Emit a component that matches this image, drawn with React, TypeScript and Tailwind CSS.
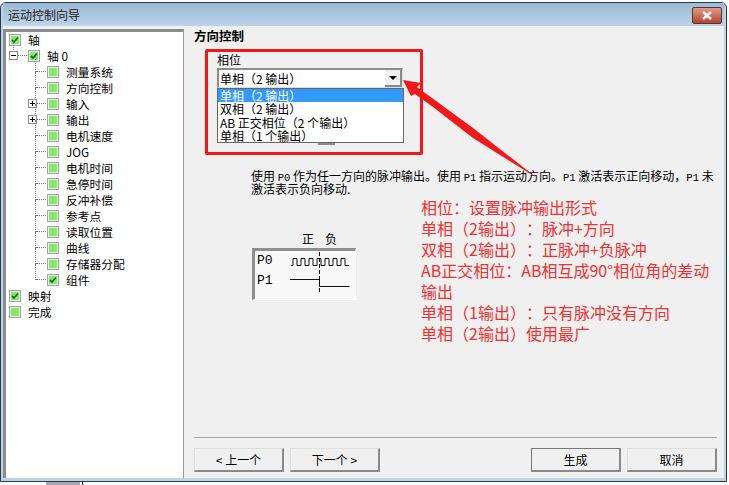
const uiFont = { fontFamily: '"Noto Sans CJK SC", "Liberation Sans", sans-serif' }

type TreeRow = { label: string; level: number; checked?: boolean; expander?: string; last?: boolean }

const rows: TreeRow[] = [
  { label: "轴", level: 0, checked: true },
  { label: "轴 0", level: 1, checked: true, expander: "-" },
  { label: "测量系统", level: 2 },
  { label: "方向控制", level: 2 },
  { label: "输入", level: 2, expander: "+" },
  { label: "输出", level: 2, expander: "+" },
  { label: "电机速度", level: 2 },
  { label: "JOG", level: 2 },
  { label: "电机时间", level: 2 },
  { label: "急停时间", level: 2 },
  { label: "反冲补偿", level: 2 },
  { label: "参考点", level: 2 },
  { label: "读取位置", level: 2 },
  { label: "曲线", level: 2 },
  { label: "存储器分配", level: 2 },
  { label: "组件", level: 2, checked: true, last: true },
  { label: "映射", level: 0, checked: true },
  { label: "完成", level: 0 },
]

const annotations = [
  "相位：设置脉冲输出形式",
  "单相（2输出）：脉冲+方向",
  "双相（2输出）：正脉冲+负脉冲",
  "AB正交相位：AB相互成90°相位角的差动",
  "输出",
  "单相（1输出）：只有脉冲没有方向",
  "单相（2输出）使用最广",
]

// square pulse train for the P0 channel
const pulses = "M39 17.5h2" + "V10.5h4V17.5h4".repeat(7)

function Mono({ children }: { children: string }) {
  return <span className="font-['Liberation_Mono'] text-[10.5px] leading-[13px]">{children}</span>
}

function CheckBox({ checked }: { checked?: boolean }) {
  return (
    <span className="flex h-[12px] w-[12px] shrink-0 items-center justify-center border border-[#97a897] bg-[#e6efe6]">
      <span className="relative h-[8px] w-[8px] bg-[#86e868]">
        {checked && (
          <svg viewBox="0 0 8 8" className="absolute inset-0 h-[8px] w-[8px]">
            <path d="M1 4l2 2 4-4.5" fill="none" stroke="#14702a" strokeWidth="1.8" />
          </svg>
        )}
      </span>
    </span>
  )
}

function Expander({ sign }: { sign: string }) {
  return (
    <span className="absolute left-[-19px] top-[1px] flex h-[9px] w-[9px] items-center justify-center border border-[#8a8a8a] bg-white">
      <span className="relative h-px w-[5px] bg-black">
        {sign === "+" && <span className="absolute left-[2px] top-[-2px] h-[5px] w-px bg-black" />}
      </span>
    </span>
  )
}

function Row({ row }: { row: TreeRow }) {
  const pad = row.level === 0 ? "pl-[3px]" : row.level === 1 ? "pl-[22px]" : "pl-[41px]"
  return (
    <div className={`flex h-[16px] items-center ${pad}`}>
      <span className="relative flex items-center">
        {row.level > 0 && (
          <span className="absolute left-[-11px] top-[5px] w-[10px] border-t border-dotted border-[#777]" />
        )}
        {row.level === 2 && (
          <span className="absolute left-[-12px] top-[-10px] h-[16px] border-l border-dotted border-[#777]" />
        )}
        {row.level === 1 && (
          <span className="absolute left-[-15px] top-[-10px] h-[12px] border-l border-dotted border-[#777]" />
        )}
        {row.expander && <Expander sign={row.expander} />}
        <CheckBox checked={row.checked} />
      </span>
      <span className="ml-[7px] whitespace-nowrap text-[11.75px] leading-[16px] text-black">{row.label}</span>
    </div>
  )
}

function WinButton({ children, isDefault }: { children: string; isDefault?: boolean }) {
  return (
    <button
      className={`flex h-[24px] w-[90px] items-center justify-center border-t border-l border-r-2 border-b-2 border-r-[#8a8a8a] border-b-[#8a8a8a] bg-[#f0f0f0] text-[12px] text-black ${
        isDefault ? "border-t-[#777] border-l-[#777]" : "border-t-[#dedede] border-l-[#dedede]"
      }`}
    >
      {children}
    </button>
  )
}

function PhaseDiagram() {
  return (
    <div className="ml-[58px] mt-[37px] w-[104px]">
      <div className="flex gap-[11px] pl-[50px] text-[12px] leading-[14px] text-black">
        <span>正</span>
        <span>负</span>
      </div>
      <div className="relative mt-[2px] h-[52px] w-[104px] border-t-[3px] border-l-[3px] border-t-[#8f8f8f] border-l-[#8f8f8f] border-r border-b border-r-white border-b-white bg-[#f8f8f8]">
        <span className="absolute left-[2px] top-[2px] font-['Liberation_Mono'] text-[13px] leading-[16px]">P0</span>
        <span className="absolute left-[2px] top-[22px] font-['Liberation_Mono'] text-[13px] leading-[16px]">P1</span>
        <svg viewBox="0 0 104 52" className="absolute left-[-3px] top-[-3px] h-[52px] w-[104px]">
          <path d={pulses} fill="none" stroke="#111" strokeWidth="1" />
          <path d="M38 31.5h29.5v7h30" fill="none" stroke="#111" strokeWidth="1" />
          <path d="M67.5 4v40" fill="none" stroke="#111" strokeWidth="1" strokeDasharray="4 2" />
        </svg>
      </div>
    </div>
  )
}

export default function App() {
  return (
    <div className="relative h-[485px] w-[729px] overflow-hidden bg-white [text-spacing-trim:space-all]" style={uiFont}>
      <div className="mt-[2px] flex h-[480px] w-[727px] flex-col rounded-t-[6px] border border-[#2b3a45] bg-[#bcd4e8] px-[2px] pb-[3px]">
        <div className="flex h-[23px] shrink-0 items-center justify-between bg-gradient-to-b from-[#9cb9d4] to-[#bcd4ea] pr-[2px] pl-[5px]">
          <span className="text-[12px] text-[#222]">运动控制向导</span>
          <span className="mt-[2px] flex h-[17px] w-[30px] items-center justify-center rounded-[2px] border border-[#4a3a3a] bg-gradient-to-b from-[#e39a86] to-[#b5412d]">
            <svg viewBox="0 0 12 9" className="h-[9px] w-[12px]">
              <path d="M2 1l8 7M10 1L2 8" stroke="#fff" strokeWidth="2.4" />
            </svg>
          </span>
        </div>

        <div className="flex min-h-0 flex-1 bg-[#f0f0f0]">
          <div className="mt-[3px] w-[181px] shrink-0 border-t-[3px] border-l-[3px] border-t-[#8c8c8c] border-l-[#8c8c8c] border-r border-r-[#9a9a9a] bg-white">
            {rows.map((row) => (
              <Row key={row.label} row={row} />
            ))}
          </div>

          <div className="flex min-w-0 flex-1 flex-col pl-[10px] pr-[7px]">
            <div className="mt-[3px] h-[14px] text-[12.5px] font-bold leading-[14px] text-black">方向控制</div>

            <div className="relative ml-[11px] mt-[6px] h-[106px] w-[218px] rounded-[2px] border-[3px] border-[#f01818] pl-[9px] pt-px">
              <div className="text-[12px] leading-[14px] text-black">相位</div>
              <div className="mt-px flex h-[20px] w-[186px] items-center justify-between border-t-2 border-l-2 border-t-[#8c8c8c] border-l-[#8c8c8c] border-r border-b border-r-[#ddd] border-b-[#ddd] bg-white pl-[1px]">
                <span className="text-[12px]">单相（2 输出）</span>
                <span className="flex h-[17px] w-[17px] items-center justify-center border-r-2 border-b-2 border-r-[#888] border-b-[#888] bg-[#f0f0f0]">
                  <span className="h-0 w-0 border-x-[4px] border-t-[4px] border-x-transparent border-t-black" />
                </span>
              </div>
              <div className="absolute left-[9px] top-[36px] h-[55px] w-[187px] border border-[#666] bg-white text-[12px] leading-[13.3px] text-black">
                <div className="bg-[#3399ff] pl-[2px] text-white">单相（2 输出）</div>
                <div className="pl-[2px]">双相（2 输出）</div>
                <div className="pl-[2px]">AB 正交相位（2 个输出）</div>
                <div className="pl-[2px]">单相（1 个输出）</div>
              </div>
              <span className="absolute left-[110px] top-[91px] h-[2px] w-[17px] bg-[#8a8a8a]" />
            </div>

            <div className="ml-[57px] mt-[14px] whitespace-nowrap text-[12px] leading-[13px] text-black">
              <div className="h-[13px]">
                使用 <Mono>P0</Mono> 作为任一方向的脉冲输出。使用 <Mono>P1</Mono> 指示运动方向。<Mono>P1</Mono> 激活表示正向移动，<Mono>P1</Mono> 未
              </div>
              <div className="h-[13px]">激活表示负向移动.</div>
            </div>

            <div className="flex">
              <PhaseDiagram />
              <div className="ml-[65px] mt-[2px] w-[300px] text-[16px] leading-[21px] text-[#f33030]">
                {annotations.map((line) => (
                  <div key={line} className="whitespace-nowrap">
                    {line}
                  </div>
                ))}
              </div>
            </div>

            <div className="mt-auto mb-[10px] border-t border-[#a8a8a8]" />
            <div className="mb-[6px] flex items-center justify-between">
              <div className="flex gap-[6px]">
                <WinButton>{"< 上一个"}</WinButton>
                <WinButton>{"下一个 >"}</WinButton>
              </div>
              <div className="flex gap-[6px]">
                <WinButton isDefault>生成</WinButton>
                <WinButton>取消</WinButton>
              </div>
            </div>
          </div>
        </div>
      </div>

      <span className="absolute left-[46px] top-[482px] h-[3px] w-[34px] bg-[#a9a9b2]" />
      <span className="absolute left-[82px] top-[482px] h-[3px] w-px bg-black" />

      <svg viewBox="0 0 729 485" className="pointer-events-none absolute inset-0 h-[485px] w-[729px]">
        <path d="M403 80L421 83 417 87 473 128 537 178 473 138 433 107 415 94 411 96Z" fill="#f01818" />
      </svg>
    </div>
  )
}
